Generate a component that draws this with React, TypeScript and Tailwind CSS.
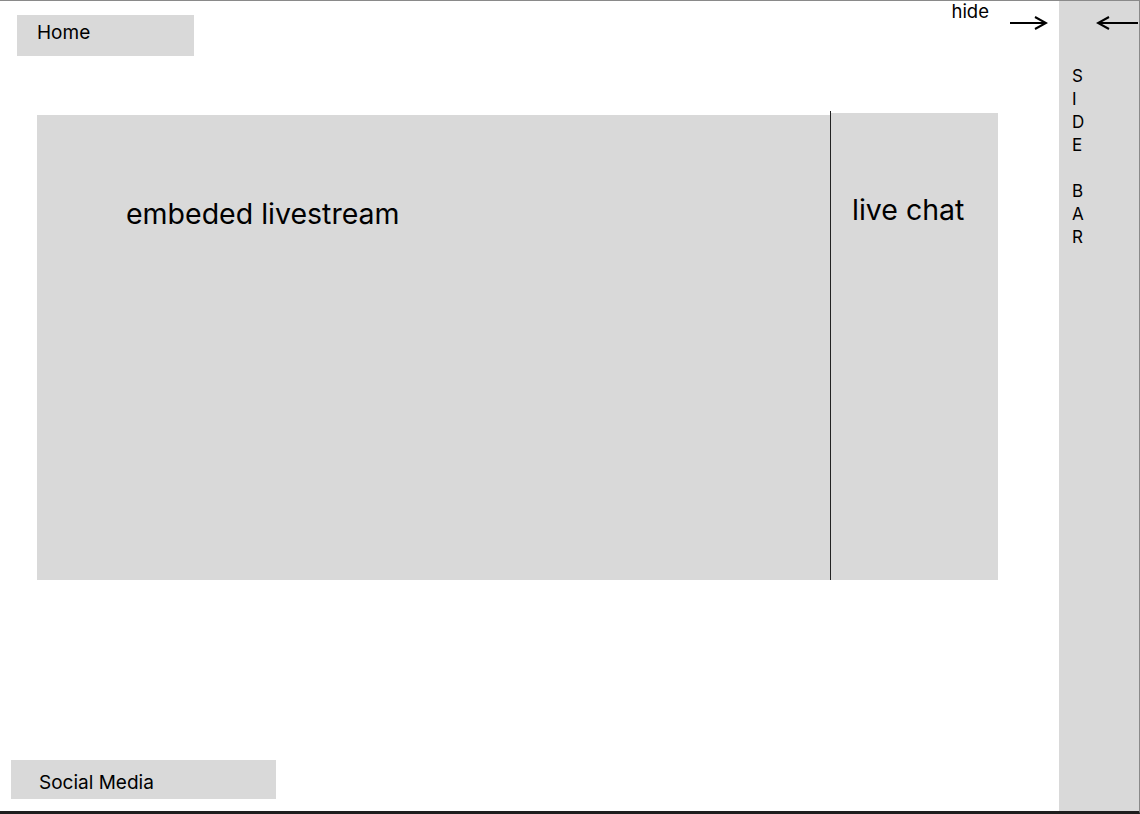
const SIDE_LETTERS = ["S", "I", "D", "E", "", "B", "A", "R"];

function ArrowRight() {
  return (
    <svg width="38" height="14" viewBox="0 0 38 14" fill="none" stroke="#000" strokeWidth="2">
      <path d="M0 7H36" />
      <path d="M25 1L36 7L25 13" />
    </svg>
  );
}

function ArrowLeft() {
  return (
    <svg width="42" height="14" viewBox="0 0 42 14" fill="none" stroke="#000" strokeWidth="2">
      <path d="M2 7H42" />
      <path d="M13 1L2 7L13 13" />
    </svg>
  );
}

export default function App() {
  return (
    <div className="flex h-[814px] w-[1140px] border-t border-r border-b-[3px] border-t-[#8a8a8a] border-r-[#8a8a8a] border-b-[#1e1e1e] bg-white font-['Inter',sans-serif] text-black">
      {/* Main column */}
      <div className="flex flex-1 flex-col">
        <div className="flex items-start">
          <div className="ml-[17px] mt-[14px] h-[41px] w-[177px] bg-[#d9d9d9] pl-[20px] pt-[7px] text-[19px] leading-[22px]">
            Home
          </div>
          <div className="ml-auto mr-[11px] flex items-start">
            <span className="text-[18.5px] leading-[20px]">hide</span>
            <div className="ml-[21px] mt-[15px]">
              <ArrowRight />
            </div>
          </div>
        </div>

        {/* Stream + chat */}
        <div className="ml-[37px] mt-[55px] flex items-end">
          <div className="h-[465px] w-[793px] bg-[#d9d9d9] pl-[89px] pt-[82px] text-[28.5px] leading-[34px]">
            embeded livestream
          </div>
          <div className="h-[469px] w-px bg-[#222]" />
          <div className="h-[467px] w-[167px] bg-[#d9d9d9] pl-[21px] pt-[80px] text-[28.5px] leading-[34px]">
            live chat
          </div>
        </div>

        <div className="mb-[12px] ml-[11px] mt-auto h-[39px] w-[265px] bg-[#d9d9d9] pl-[28px] pt-[12px] text-[19px] leading-[22px]">
          Social Media
        </div>
      </div>

      {/* Side bar */}
      <aside className="flex w-[80px] flex-col bg-[#d9d9d9]">
        <div className="ml-[37px] mt-[15px]">
          <ArrowLeft />
        </div>
        <div className="ml-[13px] mt-[35px] text-[17px] leading-[23px]">
          {SIDE_LETTERS.map((l, i) => (
            <div key={i} className="h-[23px]">
              {l}
            </div>
          ))}
        </div>
      </aside>
    </div>
  );
}
